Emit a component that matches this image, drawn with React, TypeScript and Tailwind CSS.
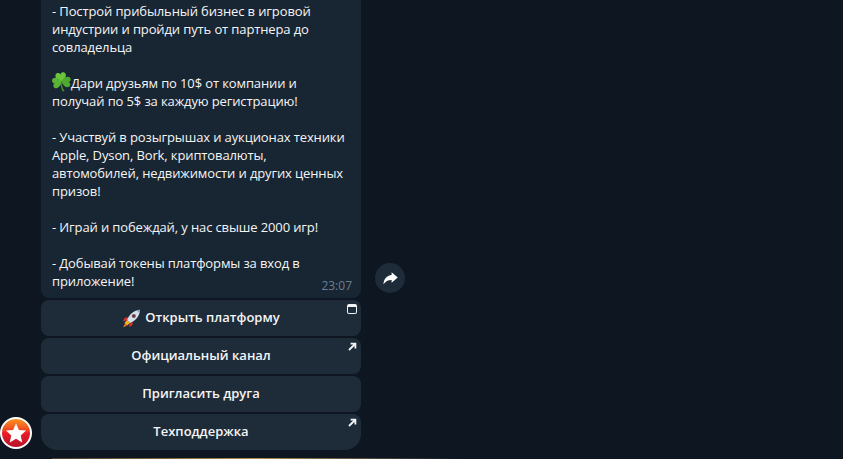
const lines = [
  "- Построй прибыльный бизнес в игровой",
  "индустрии и пройди путь от партнера до",
  "совладельца",
  "",
];

const heart = "M0 0 C-6.5 -2.5 -6.5 -9 -2.5 -9 C-1.2 -9 -0.3 -8.2 0 -7 C0.3 -8.2 1.2 -9 2.5 -9 C6.5 -9 6.5 -2.5 0 0 Z";

function Clover() {
  return (
    <svg width="20" height="20" viewBox="0 0 20 20" className="absolute left-[0px] top-[-2px]">
      <path d="M9.5 9.5 C9.8 13 10.5 16 12.5 19 L10.5 19.5 C9 16 8.5 13 8.5 9.5 Z" fill="#3f8f2c" />
      <path d={heart} transform="translate(9.5 9.5) rotate(-8)" fill="#6cc63c" />
      <path d={heart} transform="translate(9.5 9.5) rotate(-105)" fill="#58b535" />
      <path d={heart} transform="translate(9.5 9.5) rotate(95)" fill="#4fa92f" />
    </svg>
  );
}

function Rocket() {
  return (
    <svg width="19" height="19" viewBox="0 0 19 19">
      <path d="M2.5 14 L5 11 L8 14 L5 16.5 Z" fill="#f7b21b" />
      <path d="M1 18.5 L3 14.5 L5 16.5 Z" fill="#f0732a" />
      <path d="M5.5 8 L2.5 9 L1 12 L5.5 11.5 Z" fill="#d9302c" />
      <path d="M11 13.5 L10 16.5 L7 18 L7.5 13.5 Z" fill="#d9302c" />
      <path d="M5 11 C7 5.5 12 1.5 18 0.8 C17.7 7 13.5 12 8 14 Z" fill="#d4e0e8" />
      <path d="M14.5 1.3 L18 0.8 L17.7 4.5 Z" fill="#7fa3c7" />
      <circle cx="11.8" cy="7" r="2.1" fill="#8f4a52" />
      <circle cx="11.8" cy="7" r="1.1" fill="#3a3550" />
    </svg>
  );
}

function Arrow() {
  return (
    <svg width="9" height="9" viewBox="0 0 9 9" className="absolute right-[4px] top-[4px]">
      <path d="M1 8 L6.5 2.5 M2.6 1.6 H7.4 V6.4" stroke="#f0f3f5" strokeWidth="1.8" fill="none" />
    </svg>
  );
}

function KeyButton({ label, corner, last, rocket }: { label: string; corner?: "app" | "link"; last?: boolean; rocket?: boolean }) {
  return (
    <button
      className={`relative h-9 w-full flex items-center justify-center gap-1 bg-[#1e2c3a] text-[13px] font-semibold text-[#f5f5f5] rounded-lg ${last ? "rounded-b-2xl" : ""}`}
    >
      {rocket && <Rocket />}
      <span>{label}</span>
      {corner === "link" && <Arrow />}
      {corner === "app" && (
        <span className="absolute right-[4px] top-[4px] h-[10px] w-[10px] rounded-[2px] border-[1.5px] border-t-[3px] border-[#f0f3f5]" />
      )}
    </button>
  );
}

export default function App() {
  return (
    <div className="h-[459px] w-[843px] overflow-hidden bg-[#0e1621] font-['Open_Sans',sans-serif] flex">
      <div className="flex flex-col w-[41px] justify-end shrink-0 pb-[10px]">
        <div className="h-8 w-8 rounded-full border-2 border-white bg-gradient-to-b from-[#f7931e] via-[#ec1c24] to-[#b3122a] flex items-center justify-center">
          <svg width="22" height="22" viewBox="0 0 24 24"><path d="M12 1.5 15.2 8.6 23 9.4 17.2 14.6 18.8 22.3 12 18.4 5.2 22.3 6.8 14.6 1 9.4 8.8 8.6Z" fill="#fff" /></svg>
        </div>
      </div>
      <div className="flex flex-col w-[320px] shrink-0 h-full">
        <div className="relative h-[298px] shrink-0 bg-[#182533] rounded-b-lg px-[11px] pt-[2px] text-[13px] leading-[18px] tracking-[-0.12px] text-[#f5f5f5]">
          {lines.map((l, i) => (
            <div key={i} className="h-[18px] whitespace-nowrap">{l}</div>
          ))}
          <div className="h-[18px] whitespace-nowrap relative pl-[19px]"><Clover />Дари друзьям по 10$ от компании и</div>
          <div className="h-[18px] whitespace-nowrap">получай по 5$ за каждую регистрацию!</div>
          <div className="h-[18px]" />
          <div className="h-[18px] whitespace-nowrap">- Участвуй в розыгрышах и аукционах техники</div>
          <div className="h-[18px] whitespace-nowrap">Apple, Dyson, Bork, криптовалюты,</div>
          <div className="h-[18px] whitespace-nowrap">автомобилей, недвижимости и других ценных</div>
          <div className="h-[18px] whitespace-nowrap">призов!</div>
          <div className="h-[18px]" />
          <div className="h-[18px] whitespace-nowrap">- Играй и побеждай, у нас свыше 2000 игр!</div>
          <div className="h-[18px]" />
          <div className="h-[18px] whitespace-nowrap">- Добывай токены платформы за вход в</div>
          <div className="h-[18px] whitespace-nowrap">приложение!</div>
          <span className="absolute right-[9px] bottom-[3px] text-[12px] leading-[18px] tracking-normal text-[#6d7f8f]">23:07</span>
        </div>
        <div className="mt-[2px] flex flex-col gap-[2px]">
          <KeyButton label="Открыть платформу" corner="app" rocket />
          <KeyButton label="Официальный канал" corner="link" />
          <KeyButton label="Пригласить друга" />
          <KeyButton label="Техподдержка" corner="link" last />
        </div>
        <div className="mt-[8px] h-[1px] ml-[11px] w-[408px] shrink-0 bg-gradient-to-r from-[#4a3a2a] via-[#b08d4f] to-[#0e1621]" />
      </div>
      <div className="pl-[14px] pt-[263px]">
        <div className="h-[30px] w-[30px] rounded-full bg-[#1e2c3a] flex items-center justify-center">
          <svg width="15" height="13" viewBox="0 0 16 14"><path d="M9.2 0.3 L15.8 6 L9.2 11.7 V8.5 C5.5 8.4 2.8 9.8 0.4 13.2 C0.8 7.5 4.2 3.8 9.2 3.3 Z" fill="#fff" /></svg>
        </div>
      </div>
    </div>
  );
}
